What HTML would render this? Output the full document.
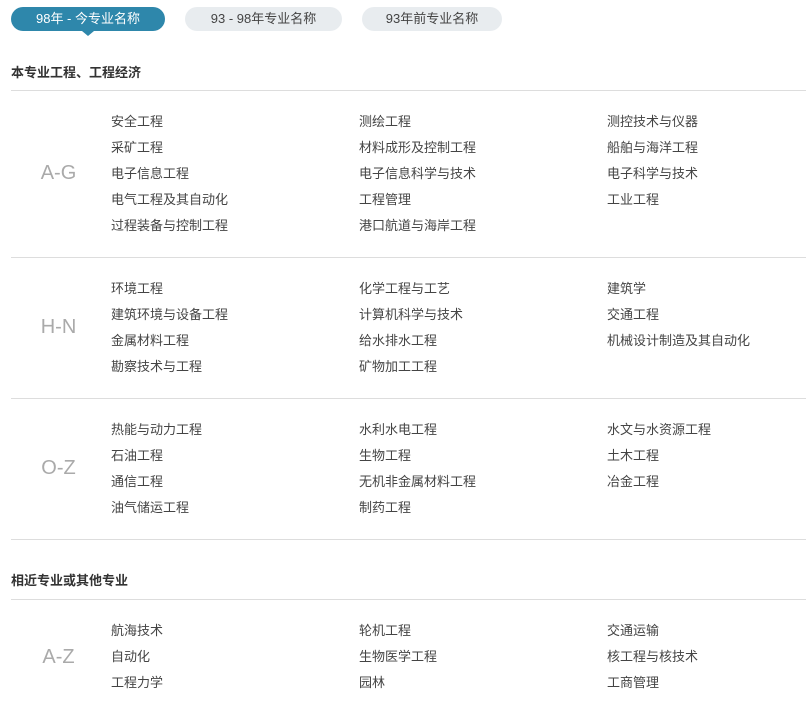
<!DOCTYPE html>
<html><head><meta charset="utf-8"><style>
*{margin:0;padding:0;box-sizing:border-box}
body{width:806px;height:714px;background:#fff;font-family:"Liberation Sans","Noto Sans CJK SC",sans-serif;color:#444;position:relative;overflow:hidden}
.tab{position:absolute;top:7px;height:24px;border-radius:12px;background:#e8ecef;color:#444;font-size:13px;line-height:24px;text-align:center}
.tab.on{background:#2e87ab;color:#fff}
.arrow{position:absolute;left:82px;top:31px;width:0;height:0;border-left:6px solid transparent;border-right:6px solid transparent;border-top:5px solid #2e87ab}
.title{position:absolute;left:11px;font-size:13px;font-weight:bold;color:#333;line-height:18px}
.line{position:absolute;left:11px;right:0;height:1px;background:#ddd}
.lab{position:absolute;left:11px;width:95px;text-align:center;font-size:20px;color:#aaa;line-height:26px}
.it{position:absolute;font-size:13px;line-height:26px;white-space:nowrap;color:#444}
</style></head><body>
<div class="tab on" style="left:11px;width:154px">98年 - 今专业名称</div>
<div class="arrow"></div>
<div class="tab" style="left:185px;width:157px">93 - 98年专业名称</div>
<div class="tab" style="left:362px;width:140px">93年前专业名称</div>

<div class="title" style="top:64px">本专业工程、工程经济</div>
<div class="line" style="top:90px"></div>

<div class="lab" style="top:160px">A-G</div>
<div class="it" style="left:111px;top:109px">安全工程</div>
<div class="it" style="left:111px;top:135px">采矿工程</div>
<div class="it" style="left:111px;top:161px">电子信息工程</div>
<div class="it" style="left:111px;top:187px">电气工程及其自动化</div>
<div class="it" style="left:111px;top:213px">过程装备与控制工程</div>
<div class="it" style="left:359px;top:109px">测绘工程</div>
<div class="it" style="left:359px;top:135px">材料成形及控制工程</div>
<div class="it" style="left:359px;top:161px">电子信息科学与技术</div>
<div class="it" style="left:359px;top:187px">工程管理</div>
<div class="it" style="left:359px;top:213px">港口航道与海岸工程</div>
<div class="it" style="left:607px;top:109px">测控技术与仪器</div>
<div class="it" style="left:607px;top:135px">船舶与海洋工程</div>
<div class="it" style="left:607px;top:161px">电子科学与技术</div>
<div class="it" style="left:607px;top:187px">工业工程</div>
<div class="line" style="top:257px"></div>

<div class="lab" style="top:314px">H-N</div>
<div class="it" style="left:111px;top:276px">环境工程</div>
<div class="it" style="left:111px;top:302px">建筑环境与设备工程</div>
<div class="it" style="left:111px;top:328px">金属材料工程</div>
<div class="it" style="left:111px;top:354px">勘察技术与工程</div>
<div class="it" style="left:359px;top:276px">化学工程与工艺</div>
<div class="it" style="left:359px;top:302px">计算机科学与技术</div>
<div class="it" style="left:359px;top:328px">给水排水工程</div>
<div class="it" style="left:359px;top:354px">矿物加工工程</div>
<div class="it" style="left:607px;top:276px">建筑学</div>
<div class="it" style="left:607px;top:302px">交通工程</div>
<div class="it" style="left:607px;top:328px">机械设计制造及其自动化</div>
<div class="line" style="top:398px"></div>

<div class="lab" style="top:455px">O-Z</div>
<div class="it" style="left:111px;top:417px">热能与动力工程</div>
<div class="it" style="left:111px;top:443px">石油工程</div>
<div class="it" style="left:111px;top:469px">通信工程</div>
<div class="it" style="left:111px;top:495px">油气储运工程</div>
<div class="it" style="left:359px;top:417px">水利水电工程</div>
<div class="it" style="left:359px;top:443px">生物工程</div>
<div class="it" style="left:359px;top:469px">无机非金属材料工程</div>
<div class="it" style="left:359px;top:495px">制药工程</div>
<div class="it" style="left:607px;top:417px">水文与水资源工程</div>
<div class="it" style="left:607px;top:443px">土木工程</div>
<div class="it" style="left:607px;top:469px">冶金工程</div>
<div class="line" style="top:539px"></div>

<div class="title" style="top:572px">相近专业或其他专业</div>
<div class="line" style="top:599px"></div>

<div class="lab" style="top:644px">A-Z</div>
<div class="it" style="left:111px;top:618px">航海技术</div>
<div class="it" style="left:111px;top:644px">自动化</div>
<div class="it" style="left:111px;top:670px">工程力学</div>
<div class="it" style="left:359px;top:618px">轮机工程</div>
<div class="it" style="left:359px;top:644px">生物医学工程</div>
<div class="it" style="left:359px;top:670px">园林</div>
<div class="it" style="left:607px;top:618px">交通运输</div>
<div class="it" style="left:607px;top:644px">核工程与核技术</div>
<div class="it" style="left:607px;top:670px">工商管理</div>
</body></html>
